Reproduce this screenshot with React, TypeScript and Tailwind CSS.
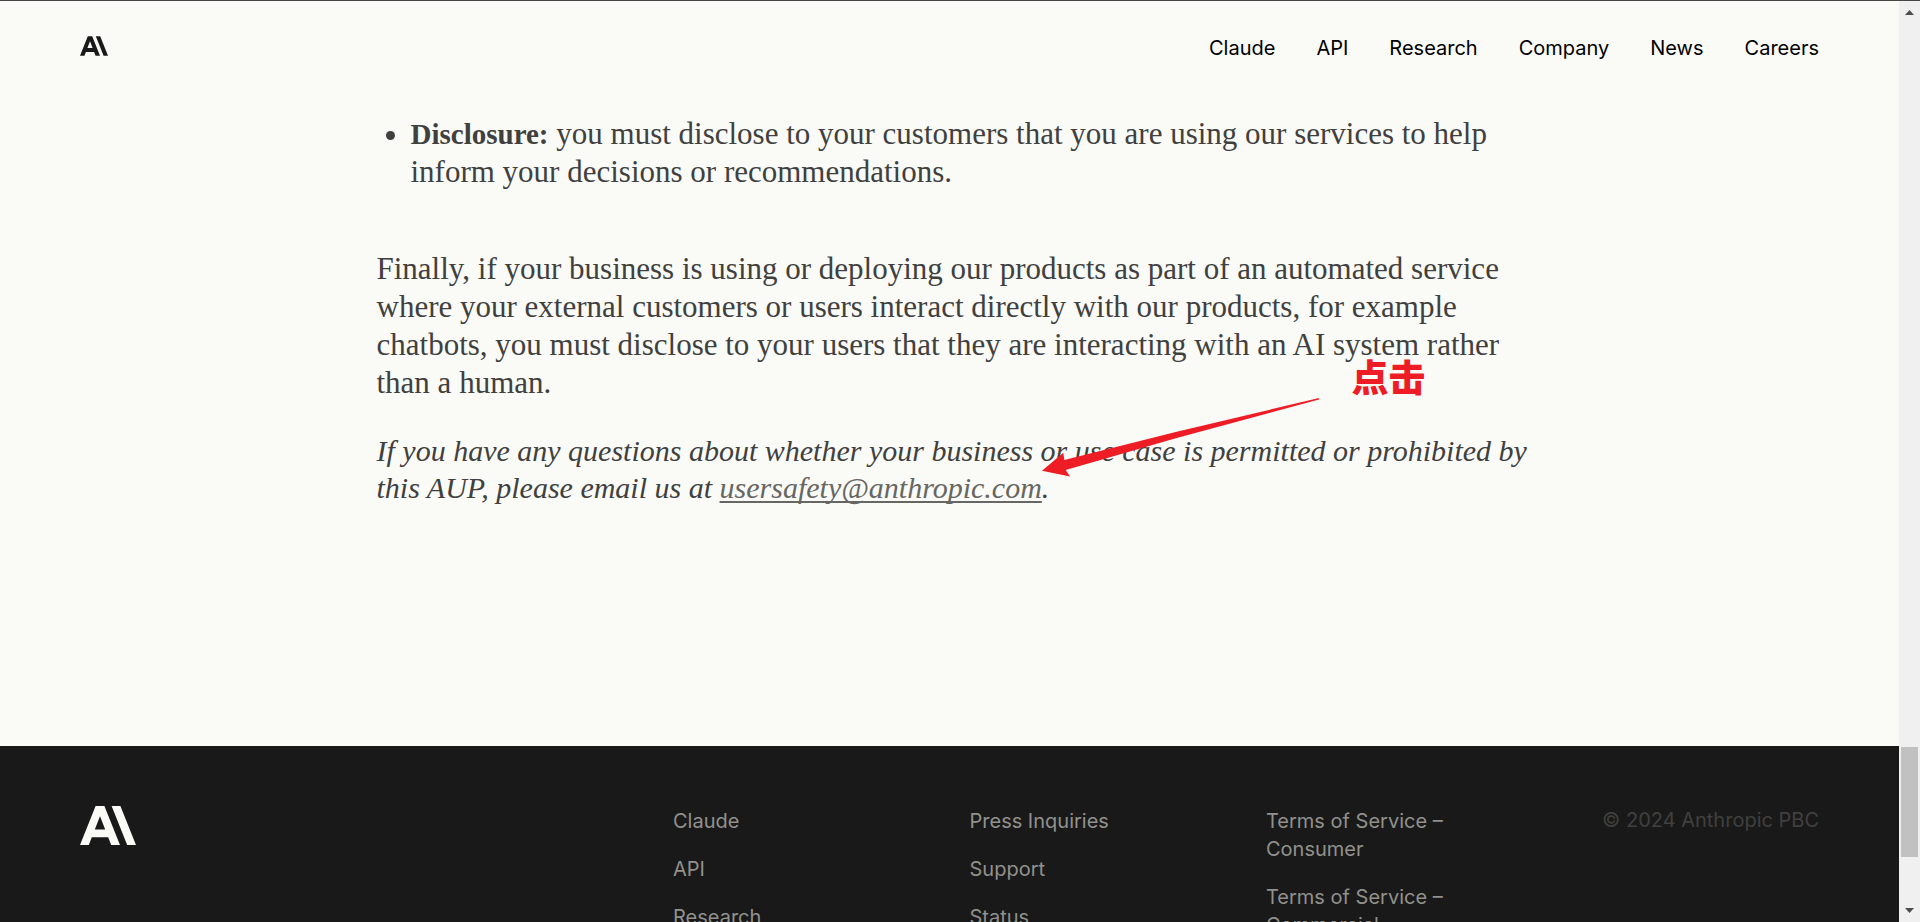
import React from "react";

const navLinks = ["Claude", "API", "Research", "Company", "News", "Careers"];

const footerColumns = [
  ["Claude", "API", "Research", "Company"],
  ["Press Inquiries", "Support", "Status"],
  ["Terms of Service – Consumer", "Terms of Service – Commercial"],
];

function Logo({ className }: { className: string }) {
  return (
    <svg viewBox="0 0 56 39" className={className} fill="currentColor" role="img" aria-label="Anthropic">
      <path
        fillRule="evenodd"
        d="M15.6 0H24.4L40 39H31.2L28.2 31.3H11.8L8.8 39H0ZM14.8 23.6H25.2L20 10.2Z"
      />
      <path d="M31.6 0H40.4L56 39H47.2Z" />
    </svg>
  );
}

function Header() {
  return (
    <header className="flex items-start justify-between px-20 pt-6">
      <a href="#home" className="pt-[11px] text-[#191919]">
        <Logo className="h-5 w-7" />
      </a>
      <nav className="flex gap-[41px] text-[20px] leading-[46px] text-black">
        {navLinks.map((label) => (
          <a key={label} href={"#" + label.toLowerCase()}>
            {label}
          </a>
        ))}
      </nav>
    </header>
  );
}

function Lines({ lines }: { lines: string[] }) {
  return (
    <>
      {lines.map((line) => (
        <span key={line} className="block whitespace-nowrap">
          {line}
        </span>
      ))}
    </>
  );
}

function Annotation() {
  return (
    <div className="pointer-events-none absolute -top-19 left-[665px] text-[#ee1c25]">
      <svg width="280" height="82" viewBox="1042 396 280 82" className="absolute left-0 top-10" fill="currentColor">
        <path d="M1042 470.700L1063.300 452.700L1064.300 460L1176.700 431.700L1319 398L1319 399.500L1176.700 437.900L1065.700 470L1070 476.400Z" />
      </svg>
      <span className="absolute left-[310px] top-0 whitespace-nowrap font-['Noto_Sans_CJK_SC',sans-serif] text-[37px] font-black leading-10">
        点击
      </span>
    </div>
  );
}

function Article() {
  return (
    <main className="grid grid-cols-6 gap-10 px-20 pt-11 font-['Liberation_Serif',serif] text-[31px] text-[#40403e]">
      <article className="col-span-4 col-start-2">
        <ul className="list-disc pl-[34px] leading-[37px]">
          <li>
            <span className="block whitespace-nowrap">
              <strong className="text-[29px]">Disclosure:</strong> you must disclose to your customers that you are
              using our services to help
            </span>
            <span className="block">inform your decisions or recommendations.</span>
          </li>
        </ul>
        <p className="mt-15 leading-[38px]">
          <Lines
            lines={[
              "Finally, if your business is using or deploying our products as part of an automated service",
              "where your external customers or users interact directly with our products, for example",
              "chatbots, you must disclose to your users that they are interacting with an AI system rather",
              "than a human.",
            ]}
          />
        </p>
        <div className="relative mt-[30px]">
          <p className="text-[30px] italic leading-[37px]">
            <Lines
              lines={["If you have any questions about whether your business or use case is permitted or prohibited by"]}
            />
            this AUP, please email us at{" "}
            <a
              href="mailto:usersafety@anthropic.com"
              className="text-[#666663] underline decoration-2 underline-offset-3 [text-decoration-skip-ink:none]"
            >
              usersafety@anthropic.com
            </a>
            .
          </p>
          <Annotation />
        </div>
      </article>
    </main>
  );
}

function Footer() {
  return (
    <footer className="mt-60 grid flex-1 grid-cols-6 gap-10 bg-[#191919] px-20 pt-15 text-[20px] leading-7 text-[#91918d]">
      <a href="#home" className="col-span-2 text-[#fafaf7]">
        <Logo className="h-[39px] w-14" />
      </a>
      {footerColumns.map((items) => (
        <ul key={items[0]} className="flex flex-col gap-5 pt-px">
          {items.map((item) => (
            <li key={item} className="max-w-50">
              <a href="#footer">{item}</a>
            </li>
          ))}
        </ul>
      ))}
      <p className="whitespace-nowrap text-right text-[#40403e]">© 2024 Anthropic PBC</p>
    </footer>
  );
}

function Scrollbar() {
  return (
    <div aria-hidden="true" className="flex w-[21px] shrink-0 flex-col items-center justify-between bg-[#f0f0f0] py-[9px] text-[#4d4d4d]">
      <svg viewBox="0 0 9 5" className="h-[5px] w-[9px]" fill="currentColor">
        <path d="M4.500 0L9 5H0Z" />
      </svg>
      <div className="flex flex-1 flex-col justify-end pb-[51px]">
        <div className="h-[110px] w-[17px] bg-[#c1c1c1]" />
      </div>
      <svg viewBox="0 0 9 5" className="h-[5px] w-[9px]" fill="currentColor">
        <path d="M0 0H9L4.500 5Z" />
      </svg>
    </div>
  );
}

export default function App() {
  return (
    <div className="flex h-screen overflow-hidden border-t border-[#4a4648] bg-[#fafaf7] font-['Inter',sans-serif]">
      <div className="flex min-w-0 flex-1 flex-col">
        <Header />
        <Article />
        <Footer />
      </div>
      <Scrollbar />
    </div>
  );
}
